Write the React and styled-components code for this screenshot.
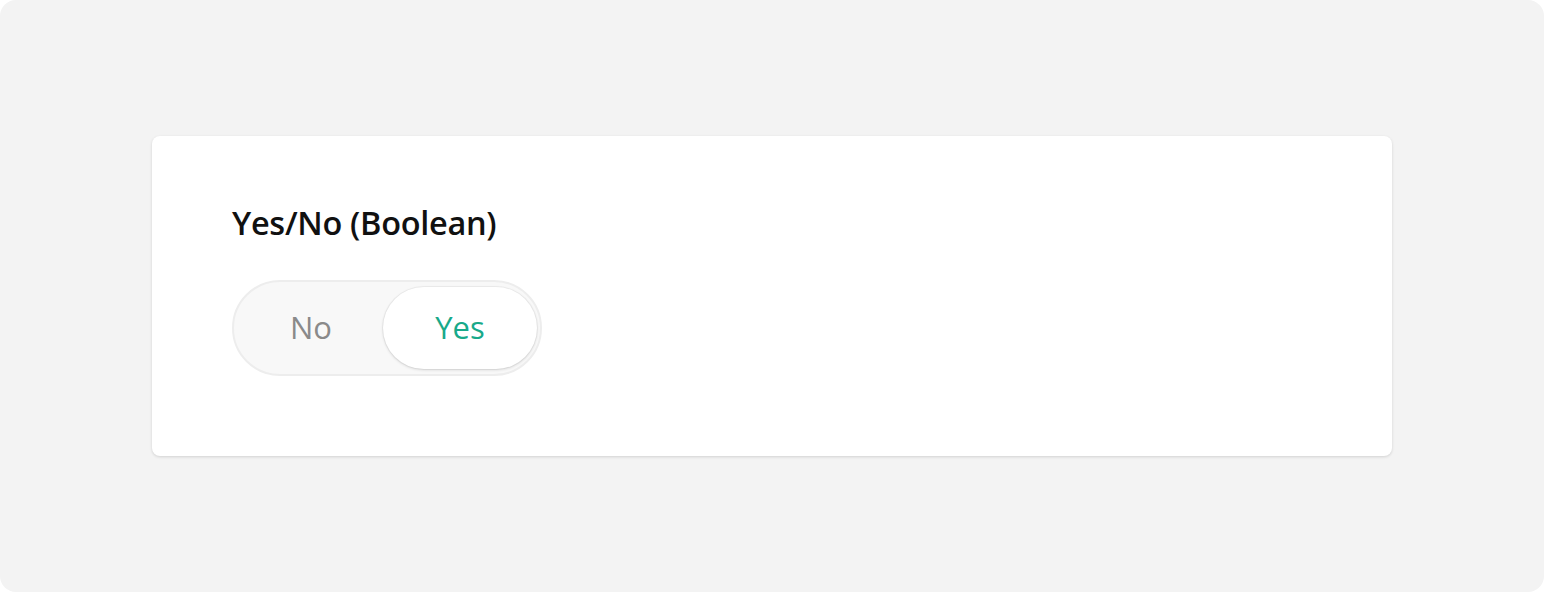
import React, { useState } from 'react';
import styled, { createGlobalStyle } from 'styled-components';

const GlobalStyle = createGlobalStyle`
  html, body {
    margin: 0;
    padding: 0;
    background: #ffffff;
  }
  body {
    font-family: "Open Sans", "Noto Sans", sans-serif;
  }
`;

const Page = styled.div`
  width: 1544px;
  height: 592px;
  box-sizing: border-box;
  background: #f3f3f3;
  border-radius: 16px;
  padding: 136px 152px;
`;

const Card = styled.div`
  background: #ffffff;
  border-radius: 8px;
  height: 320px;
  box-sizing: border-box;
  padding: 67px 80px;
  box-shadow: 0 1px 3px rgba(0, 0, 0, 0.14);
  display: flex;
  flex-direction: column;
  gap: 37px;
`;

const Label = styled.div`
  font-size: 32.5px;
  font-weight: 600;
  color: #111111;
  line-height: 40px;
  letter-spacing: -0.3px;
`;

const Toggle = styled.div`
  width: 310px;
  height: 96px;
  box-sizing: border-box;
  border: 2px solid #ededed;
  border-radius: 48px;
  background: #f8f8f8;
  padding: 5px 3px 5px 5px;
  display: flex;
`;

const Option = styled.button`
  flex: ${p => (p.active ? '0 0 154px' : '1')};
  border: none;
  border-radius: 41px;
  font-family: inherit;
  font-size: 31px;
  font-weight: 500;
  cursor: pointer;
  background: ${p => (p.active ? '#ffffff' : 'transparent')};
  color: ${p => (p.active ? '#18a98a' : '#8a8a8a')};
  box-shadow: ${p => (p.active ? '0 1px 3px rgba(0,0,0,0.14), 0 0 0 1px #eeeeee' : 'none')};
  display: flex;
  align-items: center;
  justify-content: center;
  padding: 0 0 2px 0;
`;

const App = () => {
  const [value, setValue] = useState(true);

  return (
    <>
      <GlobalStyle />
      <Page>
        <Card>
          <Label>Yes/No (Boolean)</Label>
          <Toggle>
            <Option active={!value} onClick={() => setValue(false)}>No</Option>
            <Option active={value} onClick={() => setValue(true)}>Yes</Option>
          </Toggle>
        </Card>
      </Page>
    </>
  );
};

export default App;
